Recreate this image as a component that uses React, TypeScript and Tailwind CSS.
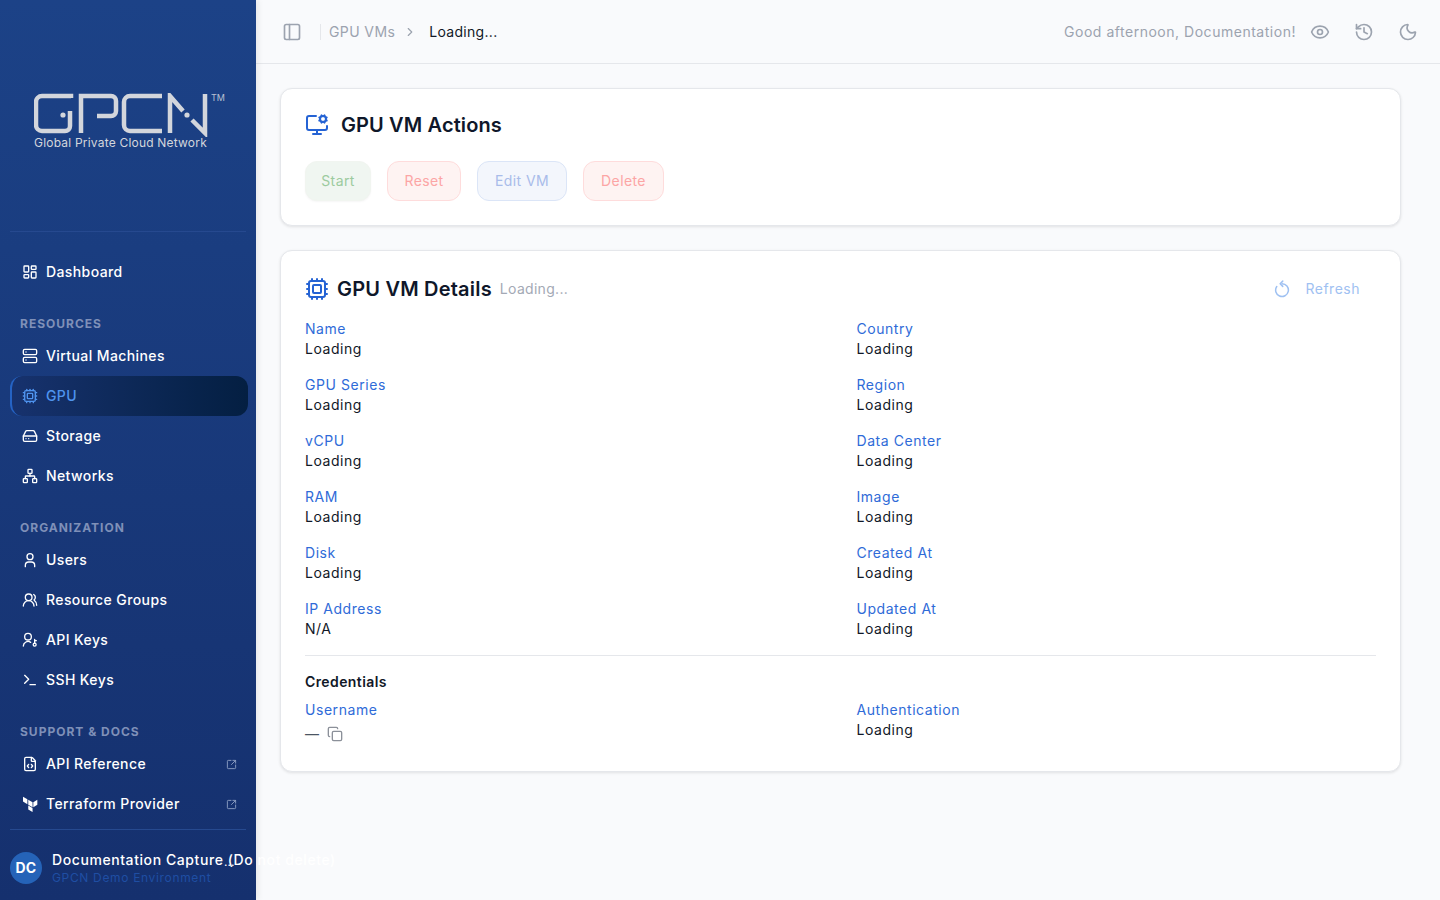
import {
  ChevronRight,
  Copy,
  Cpu,
  Eye,
  FileCode,
  HardDrive,
  History,
  LayoutDashboard,
  Moon,
  MonitorCog,
  Network,
  PanelLeft,
  Server,
  SquareArrowOutUpRight,
  Terminal,
  UsersRound,
} from "lucide-react"

const Logo = () => (
  <svg width="190" height="44" viewBox="34 93 190 44" fill="none" stroke="#d3d6dc" strokeWidth="4.5">
    <path d="M71 98V96H42a6 6 0 0 0-6 6V125a6 6 0 0 0 6 6H65a5 5 0 0 0 5-5V111" />
    <circle cx="63" cy="115" r="2.6" fill="#d3d6dc" stroke="none" />
    <path d="M81 133V96H111a5 5 0 0 1 5 5V111a5 5 0 0 1-5 5H97" />
    <path d="M162 96H130a6 6 0 0 0-6 6V125a6 6 0 0 0 6 6H162" />
    <path d="M170 133V96L183 111" />
    <circle cx="187" cy="115" r="2.6" fill="#d3d6dc" stroke="none" />
    <path d="M192 120L205 133V94" />
  </svg>
)

const UserSolo = ({ size = 16, className = "" }: any) => (
  <svg width={size} height={size} viewBox="0 0 24 24" fill="none" stroke="currentColor" strokeWidth="2" strokeLinecap="round" strokeLinejoin="round" className={className}>
    <circle cx="12" cy="7" r="4.5" />
    <path d="M5 22v-2a5 5 0 0 1 5-5h4a5 5 0 0 1 5 5v2" />
  </svg>
)

const UserKey = ({ size = 16, className = "" }: any) => (
  <svg width={size} height={size} viewBox="0 0 24 24" fill="none" stroke="currentColor" strokeWidth="2" strokeLinecap="round" strokeLinejoin="round" className={className}>
    <circle cx="9" cy="7" r="5" />
    <path d="M2 21a7 7 0 0 1 11-5.5" />
    <circle cx="19" cy="19" r="2.2" />
    <path d="M19 17v-6M19 13h2.5" />
  </svg>
)

const TerraformIcon = ({ size = 16, className = "" }: any) => (
  <svg width={size} height={size} viewBox="0 0 24 24" fill="currentColor" className={className}>
    <path d="M1.5 1l6.6 3.8v7.4L1.5 8.4z" />
    <path d="M9.4 5.5l6.4 3.7v7.5l-6.4-3.7z" />
    <path d="M17 9.2l6-3.7v7.5l-6 3.7z" />
    <path d="M9.4 14.4l6.4 3.7V24l-6.4-3.7z" />
  </svg>
)

const RefreshIcon = ({ size = 18, className = "" }: any) => (
  <svg width={size} height={size} viewBox="0 0 24 24" fill="none" stroke="currentColor" strokeWidth="2" strokeLinecap="round" strokeLinejoin="round" className={className}>
    <path d="M12 5a8.5 8.5 0 1 1-7 3.7" />
    <path d="M13 1.5L9.5 5l3.5 3.5" />
  </svg>
)

const NavItem = ({ icon: Icon, label, active, external }: any) => (
  <div
    className={
      active
        ? "flex h-10 items-center gap-2 rounded-xl border-l-2 border-[#2563c4] bg-gradient-to-r from-[#17326e] to-[#041f42] pl-[10px] pr-[11px] text-[#4f94ef]"
        : "flex h-10 items-center gap-2 rounded-xl pl-3 pr-[11px] text-white"
    }
  >
    <Icon size={16} strokeWidth={2} className="shrink-0" />
    <span className="flex-1 text-sm font-medium tracking-[0.4px]">{label}</span>
    {external && <SquareArrowOutUpRight size={11} className="text-[#8ea0c4]" />}
  </div>
)

const SectionLabel = ({ children }: any) => (
  <div className="flex h-5 items-center pl-[10px] text-xs font-bold tracking-[1px] text-[#7f90b8] uppercase">
    {children}
  </div>
)

const Sidebar = () => (
  <aside className="relative z-10 flex h-full w-64 shrink-0 flex-col bg-gradient-to-b from-[#1c4287] to-[#15306e] shadow-[2px_0_6px_rgba(0,0,0,0.08)]">
    <div className="mr-[10px] ml-[10px] flex h-[232px] shrink-0 flex-col border-b border-[#26498f] pt-[93px] pl-6">
      <div className="relative">
        <Logo />
        <span className="absolute top-[-1px] left-[177px] text-[9px] leading-3 text-[#b9c2d3]">TM</span>
      </div>
      <div className="mt-[-2px] text-xs leading-4 tracking-[0.2px] whitespace-nowrap text-[#d3d6dc]">
        Global Private Cloud Network
      </div>
    </div>
    <nav className="flex flex-1 flex-col pt-5 pr-2 pl-[10px]">
      <NavItem icon={LayoutDashboard} label="Dashboard" />
      <div className="mt-[22px] mb-[2px]">
        <SectionLabel>Resources</SectionLabel>
      </div>
      <NavItem icon={Server} label="Virtual Machines" />
      <NavItem icon={Cpu} label="GPU" active />
      <NavItem icon={HardDrive} label="Storage" />
      <NavItem icon={Network} label="Networks" />
      <div className="mt-[22px] mb-[2px]">
        <SectionLabel>Organization</SectionLabel>
      </div>
      <NavItem icon={UserSolo} label="Users" />
      <NavItem icon={UsersRound} label="Resource Groups" />
      <NavItem icon={UserKey} label="API Keys" />
      <NavItem icon={Terminal} label="SSH Keys" />
      <div className="mt-[22px] mb-[2px]">
        <SectionLabel>Support &amp; Docs</SectionLabel>
      </div>
      <NavItem icon={FileCode} label="API Reference" external />
      <NavItem icon={TerraformIcon} label="Terraform Provider" external />
    </nav>
    <div className="relative mx-[10px] flex h-[71px] shrink-0 items-center gap-[10px] border-t border-[#26498f] pt-[6px]">
      <div className="flex h-8 w-8 shrink-0 items-center justify-center rounded-full bg-[#2563b8] text-sm font-bold tracking-[0.3px] text-white">
        DC
      </div>
      <div className="min-w-0">
        <div className="text-sm leading-5 font-medium tracking-[0.58px] whitespace-nowrap text-white">
          Documentation Capture (Do not delete)
        </div>
        <div className="text-xs leading-4 tracking-[0.66px] whitespace-nowrap text-[#1f4ea3]">
          GPCN Demo Environment
        </div>
      </div>
      <span className="absolute top-[24px] left-[214px] text-xs leading-4 text-white">...</span>
    </div>
  </aside>
)

const TopBar = () => (
  <header className="flex h-16 shrink-0 items-center border-b border-[#e5e7eb] pr-[22px] pl-[26px]">
    <PanelLeft size={20} className="text-[#9ca3af]" />
    <div className="mr-2 ml-[18px] h-4 w-px bg-[#e5e7eb]" />
    <span className="text-sm tracking-[0.4px] text-[#9ca3af]">GPU VMs</span>
    <ChevronRight size={14} className="mr-3 ml-2 text-[#9ca3af]" />
    <span className="text-sm tracking-[0.3px] text-[#111827]">Loading...</span>
    <div className="ml-auto flex items-center text-[#9ca3af]">
      <span className="text-sm tracking-[0.52px]">Good afternoon, Documentation!</span>
      <Eye size={20} className="ml-[14px]" />
      <History size={20} className="ml-6" />
      <Moon size={20} className="ml-6" />
    </div>
  </header>
)

const Field = ({ label, value }: { label: string; value: string }) => (
  <div>
    <div className="text-sm leading-5 tracking-[0.55px] text-[#2f6bd8]">{label}</div>
    <div className="text-sm leading-5 tracking-[0.55px] text-[#111827]">{value}</div>
  </div>
)

const actionButton = "flex h-10 items-center justify-center rounded-xl border text-sm tracking-[0.4px]"

const rows = [
  ["Name", "Loading", "Country", "Loading"],
  ["GPU Series", "Loading", "Region", "Loading"],
  ["vCPU", "Loading", "Data Center", "Loading"],
  ["RAM", "Loading", "Image", "Loading"],
  ["Disk", "Loading", "Created At", "Loading"],
  ["IP Address", "N/A", "Updated At", "Loading"],
]

const App = () => {
  return (
    <div className="flex h-screen w-full overflow-hidden bg-[#f9fafc] font-['Inter',sans-serif]">
      <Sidebar />
      <main className="flex min-w-0 flex-1 flex-col">
        <TopBar />
        <div className="flex flex-col gap-6 pt-6 pr-[39px] pl-6">
          <section className="rounded-xl border border-[#e5e7eb] bg-white p-6 shadow-[0_1px_3px_rgba(0,0,0,0.1)]">
            <div className="mb-6 flex h-6 items-center gap-3">
              <MonitorCog size={24} className="text-[#2563d4]" />
              <h2 className="text-xl font-semibold tracking-[0.12px] text-[#0f172a]">GPU VM Actions</h2>
            </div>
            <div className="flex gap-4">
              <button className={`${actionButton} w-[66px] border-[#f1f5f0] bg-[#f0f6f1] text-[#9ccb9f] shadow-[0_1px_2px_rgba(0,0,0,0.04)]`}>Start</button>
              <button className={`${actionButton} w-[74px] border-[#fedcdc] bg-[#fef3f2] text-[#fca5a5]`}>Reset</button>
              <button className={`${actionButton} w-[90px] border-[#dbe5f7] bg-[#f3f6fc] text-[#a9bcea]`}>Edit VM</button>
              <button className={`${actionButton} w-[81px] border-[#fedcdc] bg-[#fef3f2] text-[#fca5a5]`}>Delete</button>
            </div>
          </section>

          <section className="rounded-xl border border-[#e5e7eb] bg-white p-6 shadow-[0_1px_3px_rgba(0,0,0,0.1)]">
            <div className="mb-4 flex h-7 items-center">
              <Cpu size={24} className="text-[#2563d4]" />
              <h2 className="ml-2 text-xl font-semibold tracking-[0.2px] text-[#0f172a]">GPU VM Details</h2>
              <span className="ml-2 text-sm tracking-[0.3px] text-[#a3a9b5]">Loading...</span>
              <div className="mr-4 ml-auto flex items-center gap-[14px] text-[#9fc1f2]">
                <RefreshIcon size={18} />
                <span className="text-sm tracking-[0.5px]">Refresh</span>
              </div>
            </div>
            <div className="grid grid-cols-2 gap-x-8 gap-y-4">
              {rows.map((r) => [
                <Field key={r[0]} label={r[0]} value={r[1]} />,
                <Field key={r[2]} label={r[2]} value={r[3]} />,
              ])}
            </div>
            <div className="mt-4 border-t border-[#e5e7eb] pt-4">
              <h3 className="mb-[8px] text-sm leading-5 font-semibold tracking-[0.4px] text-[#111827]">Credentials</h3>
              <div className="grid grid-cols-2 gap-x-8">
                <div>
                  <div className="text-sm leading-5 tracking-[0.55px] text-[#2f6bd8]">Username</div>
                  <div className="flex h-[27px] items-center gap-2 text-sm text-[#4b5563]">
                    <span>—</span>
                    <Copy size={16} className="text-[#8b9099]" />
                  </div>
                </div>
                <Field label="Authentication" value="Loading" />
              </div>
            </div>
          </section>
        </div>
      </main>
    </div>
  )
}

export default App
